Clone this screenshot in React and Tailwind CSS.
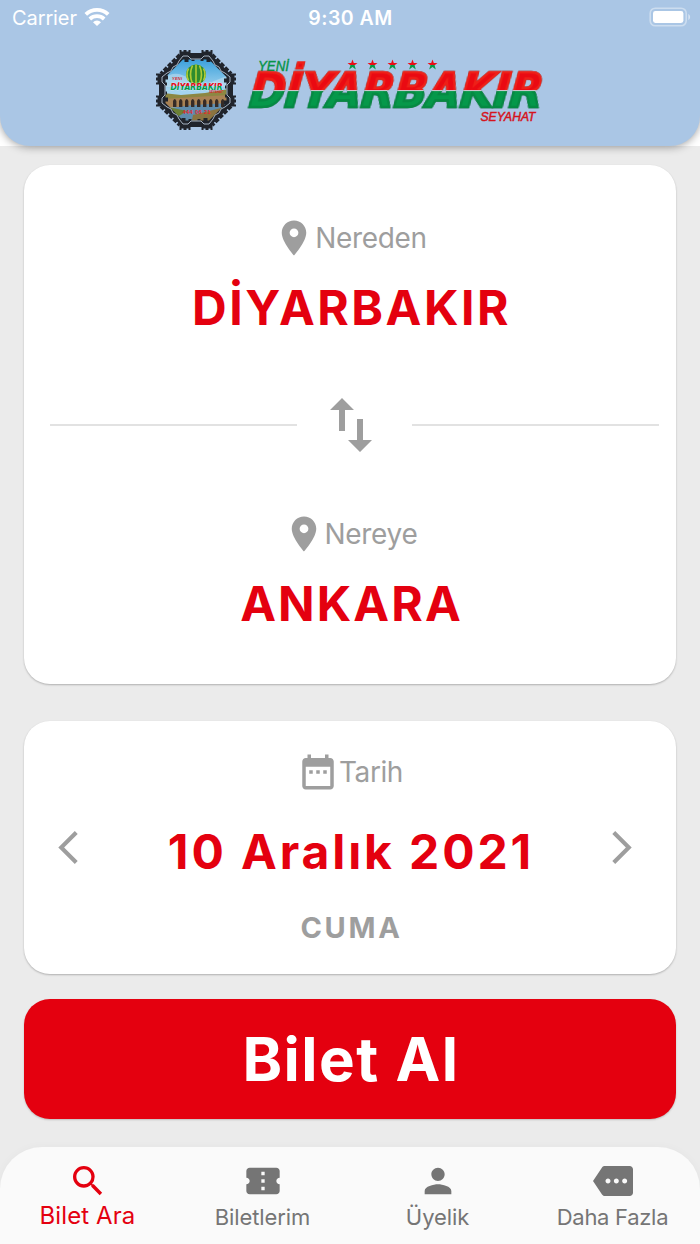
import { useState } from 'react'

const paths = {
  pin: 'M12 2C8.13 2 5 5.13 5 9c0 5.25 7 13 7 13s7-7.75 7-13c0-3.87-3.13-7-7-7zm0 9.5a2.5 2.5 0 0 1 0-5 2.5 2.5 0 0 1 0 5z',
  swap: 'M16 17.01V10h-2v7.01h-3L15 21l4-3.99h-3zM9 3L5 6.99h3V14h2V6.99h3L9 3z',
  calendar:
    'M9 11H7v2h2v-2zm4 0h-2v2h2v-2zm4 0h-2v2h2v-2zm2-7h-1V2h-2v2H8V2H6v2H5c-1.11 0-1.99.9-1.99 2L3 20c0 1.1.89 2 2 2h14c1.1 0 2-.9 2-2V6c0-1.1-.9-2-2-2zm0 16H5V9h14v11z',
  search:
    'M15.5 14h-.79l-.28-.27A6.471 6.471 0 0 0 16 9.5 6.5 6.5 0 1 0 9.5 16c1.61 0 3.09-.59 4.23-1.57l.27.28v.79l5 4.99L20.49 19l-4.99-5zm-6 0C7.01 14 5 11.99 5 9.5S7.01 5 9.5 5 14 7.01 14 9.5 11.99 14 9.5 14z',
  ticket:
    'M22 10V6c0-1.11-.9-2-2-2H4c-1.1 0-1.99.89-1.99 2v4c1.1 0 1.99.9 1.99 2s-.89 2-2 2v4c0 1.1.9 2 2 2h16c1.1 0 2-.9 2-2v-4c-1.1 0-2-.9-2-2s.9-2 2-2zm-9 7.5h-2v-2h2v2zm0-4.5h-2v-2h2v2zm0-4.5h-2v-2h2v2z',
  person:
    'M12 12c2.21 0 4-1.79 4-4s-1.79-4-4-4-4 1.79-4 4 1.79 4 4 4zm0 2c-2.67 0-8 1.34-8 4v2h16v-2c0-2.66-5.33-4-8-4z',
  more: 'M22 3H7c-.69 0-1.23.35-1.59.88L0 12l5.41 8.11c.36.53.9.89 1.59.89h15c1.1 0 2-.9 2-2V5c0-1.1-.9-2-2-2zM9 13.5c-.83 0-1.5-.67-1.5-1.5s.67-1.5 1.5-1.5 1.5.67 1.5 1.5-.67 1.5-1.5 1.5zm5 0c-.83 0-1.5-.67-1.5-1.5s.67-1.5 1.5-1.5 1.5.67 1.5 1.5-.67 1.5-1.5 1.5zm5 0c-.83 0-1.5-.67-1.5-1.5s.67-1.5 1.5-1.5 1.5.67 1.5 1.5-.67 1.5-1.5 1.5z',
}

function Icon({ name, className }) {
  return (
    <svg viewBox="0 0 24 24" fill="currentColor" className={`shrink-0 ${className}`}>
      <path d={paths[name]} />
    </svg>
  )
}

function StatusBar() {
  return (
    <div className="grid h-9 grid-cols-3 items-center pr-[9px] pl-3 text-white">
      <div className="flex items-center gap-[7px]">
        <span className="text-[20px] leading-9 tracking-[-0.1px]">Carrier</span>
        <svg viewBox="0 0 26 20" className="h-5 w-[26px]" fill="none" stroke="currentColor" strokeWidth="3.8">
          <path d="M1.8 6.4a16.3 16.3 0 0 1 22.4 0" />
          <path d="M5.8 11a10.6 10.6 0 0 1 14.4 0" />
          <path d="M13 18l-4-3.8a5.8 5.8 0 0 1 8 0z" fill="currentColor" stroke="none" />
        </svg>
      </div>
      <span className="pr-0.5 text-center text-[19.5px] leading-9 font-semibold tracking-[0.5px]">9:30 AM</span>
      <svg viewBox="0 0 42 20" className="mb-0.5 h-5 w-[42px] justify-self-end">
        <rect x="1.2" y="1.2" width="36" height="17.6" rx="5" fill="none" stroke="#fff" strokeOpacity=".4" strokeWidth="1.6" />
        <rect x="4" y="4" width="30.4" height="12" rx="2.4" fill="#fff" />
        <path d="M39.3 7c2.4 1 2.4 5 0 6z" fill="#fff" fillOpacity=".5" />
      </svg>
    </div>
  )
}

const octagon = 'M27 8h28l19 19v28l-19 19h-28l-19-19v-28z'

// one side of the city wall: curtain wall with a tower at each end
function Wall({ angle }) {
  return (
    <g transform={`rotate(${angle} 41 41)`}>
      <path d="M24.5 6V1h2v1.5h2V1h3v1.5h2V1h2v3h11V1h2v1.5h2V1h3v1.5h2V1h2v5l-2 2v5h-4V9h-3v3h-3V9h-6v3h-3V9h-3v4h-4V8z" fill="#20242c" />
      <path d="M24 12l4-5h5l3 3h10l3-3h5l4 5" fill="none" stroke="#b4c3d2" strokeWidth=".9" />
    </g>
  )
}

function Emblem() {
  return (
    <svg viewBox="0 0 82 82" className="h-[82px] w-[82px]">
      <defs>
        <linearGradient id="sky" x1="0" y1="0" x2="0" y2="1">
          <stop offset="0" stopColor="#168fd5" />
          <stop offset=".5" stopColor="#a5d4ef" />
        </linearGradient>
        <clipPath id="scene">
          <path d={octagon} />
        </clipPath>
      </defs>
      <g clipPath="url(#scene)">
        <rect width="82" height="82" fill="url(#sky)" />
        <path d="M8 30q10-8 19-4t14 4l-4 8H8zM54 34l20-8v12H54z" fill="#c9e2ef" opacity=".5" />
        <path d="M8 44l18 2 24-2 24-4v18H8z" fill="#8c8742" />
        <path d="M8 50l66-4v10L8 59z" fill="#a98254" />
        <path d="M8 60l30-4 36-2v22H8z" fill="#5f8cad" />
        <path d="M38 66l36-9v9L55 76H36z" fill="#8a7440" />
        <path d="M8 57l24 5-8 5-16-3z" fill="#6c8136" />
        <g fill="#352b27">
          {[18, 24, 30, 36, 42, 48, 54, 60, 66].map((x) => (
            <path key={x} d={`M${x} 58v-6q1.7-4 3.4 0v6z`} />
          ))}
        </g>
        <circle cx="41" cy="25.5" r="10" fill="#2f8c2e" />
        <g fill="none" stroke="#b1cb35" strokeWidth="1.6">
          <path d="M41 15.500v20M37.500 16.500q-4 9 0 18M44.500 16.500q4 9 0 18M33.500 19.500q-3 6 0 12M48.500 19.500q3 6 0 12" />
        </g>
      </g>
      <path d={octagon} fill="none" stroke="#20242c" strokeWidth="5" />
      <path d="M25 6L6 25M57 6l19 19M6 57l19 19M76 57L57 76" stroke="#20242c" strokeWidth="4" strokeDasharray="4.5 1.5" />
      {[0, 90, 180, 270].map((angle) => (
        <Wall key={angle} angle={angle} />
      ))}
      <path
        d="M24 12l-2 4-4 2-2 4-4 2M58 12l2 4 4 2 2 4 4 2M24 70l-2-4-4-2-2-4-4-2M58 70l2-4 4-2 2-4 4-2"
        fill="none"
        stroke="#b4c3d2"
        strokeWidth=".9"
      />
      <g fontFamily="Liberation Sans, sans-serif" fontWeight="700">
        <text x="17" y="31" fontSize="4" fontStyle="italic" fill="#d8232a" textLength="10">YENİ</text>
        <text x="15.5" y="40.5" fontFamily="DejaVu Sans, sans-serif" fontSize="9.5" fontStyle="italic" fill="url(#flag)" stroke="#e4eef4" strokeWidth=".6" paintOrder="stroke" textLength="52" lengthAdjust="spacingAndGlyphs">
          DİYARBAKIR
        </text>
        <text x="54" y="43.6" fontSize="3" fontStyle="italic" fill="#d8232a">SEYAHAT</text>
        <text x="27.5" y="64.5" fontSize="5.5" fill="#e8252b" textLength="28">444 06 21</text>
      </g>
    </svg>
  )
}

function Wordmark() {
  return (
    <svg viewBox="0 0 310 76" className="h-[76px] w-[310px] overflow-visible">
      <defs>
        <linearGradient id="flag" x1="0" y1="0" x2="0" y2="1">
          <stop offset=".54" stopColor="#e90c16" />
          <stop offset=".54" stopColor="#079a46" />
        </linearGradient>
        <linearGradient id="split" gradientUnits="userSpaceOnUse" x1="0" y1="-44.5" x2="0" y2="1.5">
          <stop offset=".59" stopColor="#ea0a12" />
          <stop offset=".59" stopColor="#c9d8dc" />
          <stop offset=".615" stopColor="#c9d8dc" />
          <stop offset=".615" stopColor="#05984a" />
        </linearGradient>
        <linearGradient id="edge" gradientUnits="userSpaceOnUse" x1="0" y1="-44.5" x2="0" y2="1.5">
          <stop offset=".59" stopColor="#ee2018" />
          <stop offset=".59" stopColor="#c9d8dc" />
          <stop offset=".615" stopColor="#c9d8dc" />
          <stop offset=".615" stopColor="#058a43" />
        </linearGradient>
      </defs>
      <g fontFamily="Liberation Sans, sans-serif" fontStyle="italic">
        <text x="11" y="18.5" fontSize="14.5" fill="#079447" stroke="#079447" strokeWidth=".4" textLength="31" lengthAdjust="spacingAndGlyphs">
          YENİ
        </text>
        <text
          transform="translate(1.5 55) skewX(-6)"
          className="drop-shadow-[0.5px_0.8px_0.4px_rgba(20,50,30,0.7)]"
          fontFamily="DejaVu Sans, sans-serif"
          fontWeight="700"
          fontSize="47"
          fill="url(#split)"
          stroke="url(#edge)"
          strokeWidth="2.6"
          textLength="293"
          lengthAdjust="spacingAndGlyphs"
        >
          DİYARBAKIR
        </text>
        <text x="233.5" y="69" fontSize="13" fill="#d5141d" stroke="#d5141d" strokeWidth=".5" textLength="55" lengthAdjust="spacingAndGlyphs">
          SEYAHAT
        </text>
      </g>
      {[105.5, 125.5, 145.5, 165.5, 185.5].map((x) => (
        <path key={x} transform={`translate(${x} 12.5)`} d="M0-5l1.3 3.4H5L2.1.7 3.3 5 0 2.4-3.3 5-2.1.7-5-1.6h3.7z" fill="url(#flag)" />
      ))}
    </svg>
  )
}

function Header() {
  return (
    <div className="h-[146px] bg-white">
      <header className="relative h-full rounded-b-[30px] bg-[#aac6e5] shadow-[0_1px_8px_rgba(0,0,0,0.38)]">
        <StatusBar />
        <div className="flex pt-[13px] pl-[155px]">
          <Emblem />
          <div className="pt-[3px] pl-[10px]">
            <Wordmark />
          </div>
        </div>
      </header>
    </div>
  )
}

function Station({ label, city, spacing }) {
  return (
    <div className="text-center">
      <div className="flex h-[42px] items-center justify-center text-[28px] tracking-[-0.3px] text-[#9e9e9e]">
        <Icon name="pin" className="h-[42px] w-[42px]" />
        <span className="leading-[42px]">{label}</span>
      </div>
      <p className={`mt-[18px] pl-[3px] text-[48px] leading-[62px] font-bold text-[#e4000f] ${spacing}`}>{city}</p>
    </div>
  )
}

function Chevron({ flip }) {
  return (
    <svg viewBox="0 0 11.77 20" className={`h-[33px] w-[20px] ${flip ? 'rotate-180' : ''}`} fill="currentColor">
      <path d="M11.77 1.77L10 0 0 10l10 10 1.77-1.77L3.54 10z" />
    </svg>
  )
}

const tabs = [
  { id: 'search', label: 'Bilet Ara', spacing: 'tracking-[0.1px]' },
  { id: 'ticket', label: 'Biletlerim', spacing: 'tracking-[-0.1px]' },
  { id: 'person', label: 'Üyelik', spacing: 'tracking-[-0.1px]' },
  { id: 'more', label: 'Daha Fazla', spacing: 'tracking-[-0.3px]' },
]

export default function App() {
  const [active, setActive] = useState('search')
  const [route, setRoute] = useState(['DİYARBAKIR', 'ANKARA'])

  return (
    <div className="flex h-[1244px] w-[700px] flex-col overflow-hidden bg-[#ebebeb] font-['Inter',sans-serif]">
      <Header />

      <main className="flex-1 px-6 pt-[19px]">
        <section className="h-[519px] rounded-[26px] bg-white pt-[51.5px] shadow-[0_1px_2px_rgba(0,0,0,0.25)]">
          <Station label="Nereden" city={route[0]} spacing="tracking-[2.5px]" />
          <div className="mt-[50px] flex h-[72px] items-center pr-[17px] pl-[26px]">
            <div className="h-0.5 flex-1 bg-[#e2e2e2]" />
            <button className="mr-[25px] ml-[18px] text-[#9e9e9e]" onClick={() => setRoute([route[1], route[0]])}>
              <Icon name="swap" className="h-[72px] w-[72px]" />
            </button>
            <div className="h-0.5 flex-1 bg-[#e2e2e2]" />
          </div>
          <div className="pt-[52px]">
            <Station label="Nereye" city={route[1]} spacing="tracking-[2.1px]" />
          </div>
        </section>

        <section className="mt-[37px] h-[253px] rounded-[26px] bg-white pt-[30px] text-center shadow-[0_1px_2px_rgba(0,0,0,0.25)]">
          <div className="flex h-[42px] items-center justify-center text-[28px] tracking-[-0.4px] text-[#9e9e9e]">
            <Icon name="calendar" className="h-[42px] w-[42px]" />
            <span className="leading-[42px]">Tarih</span>
          </div>
          <div className="mt-7 flex h-[62px] items-center justify-between pr-[44px] pl-[34px] text-[#9e9e9e]">
            <button className="pb-[10px]">
              <Chevron />
            </button>
            <p className="pl-3 text-[48px] leading-[62px] font-bold tracking-[2.9px] text-[#e4000f]">10 Aralık 2021</p>
            <button className="pb-[10px]">
              <Chevron flip />
            </button>
          </div>
          <p className="mt-[25px] pl-[3px] text-[29px] leading-10 font-bold tracking-[2.7px] text-[#9e9e9e]">CUMA</p>
        </section>

        <button className="mt-[25px] block h-[120px] w-full rounded-[26px] bg-[#e4000f] pl-0.5 text-[60px] leading-[120px] font-bold tracking-[1.5px] text-white shadow-[0_1px_2px_rgba(0,0,0,0.2)]">
          Bilet Al
        </button>
      </main>

      <nav className="grid h-[97px] grid-cols-4 rounded-t-[42px] bg-[#fafafa] shadow-[0_0_10px_rgba(0,0,0,0.03)]">
        {tabs.map((t) => (
          <button
            key={t.id}
            onClick={() => setActive(t.id)}
            className={`flex flex-col items-center pt-3.5 ${active === t.id ? 'text-[#e4000f]' : 'text-[#757575]'}`}
          >
            <Icon name={t.id} className="h-10 w-10" />
            <span className={`${t.spacing} ${active === t.id ? 'text-[24px] leading-[30px]' : 'text-[22px] leading-[33px]'}`}>
              {t.label}
            </span>
          </button>
        ))}
      </nav>
    </div>
  )
}
